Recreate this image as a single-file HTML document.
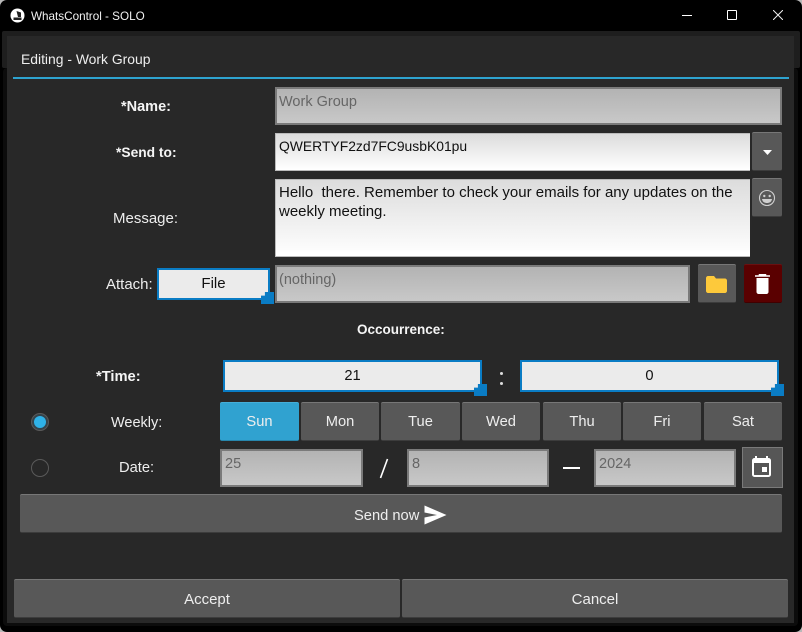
<!DOCTYPE html>
<html><head><meta charset="utf-8">
<style>
html,body{margin:0;padding:0;background:#b8b8b8;}
body{width:802px;height:632px;overflow:hidden;position:relative;font-family:"Liberation Sans",sans-serif;font-size:14.7px;color:#eee;}
div,svg{position:absolute;box-sizing:border-box;}
.t{white-space:nowrap;line-height:18px;}
.btn{background:#585858;border-radius:2px;border-top:1px solid #777;border-bottom:1px solid #3c3c3c;color:#eee;text-align:center;}
.dis{background:linear-gradient(#b3b3b3,#c8c8c8);border:2px solid #7a7a7a;color:#666;padding:4px 0 0 2px;line-height:18px;font-size:14.500px;}
.inp{background:linear-gradient(#dcdcdc,#fff);border:1px solid #bbb;border-right:0;color:#111;padding:3px 3px;line-height:19px;}
.foc{background:#ebebeb;border:3px solid #0a7cc4;border-width:2.500px;color:#111;text-align:center;}
.h{background:#0a7cc4;width:13px;height:12px;clip-path:polygon(30% 0,100% 0,100% 100%,0 100%,0 30%,30% 30%);}
</style></head><body>
<div style="left:0;top:0;width:802px;height:632px;background:#000;border-radius:7px;"></div>
<div style="left:2px;top:31px;width:798px;height:37px;background:#1e1e1e;border-radius:2px;"></div>
<div style="left:3px;top:68px;width:795px;height:558px;background:#0c0c0c;border-radius:4px;"></div>
<svg style="left:10px;top:8px" width="15" height="15" viewBox="0 0 15 15"><circle cx="7.500" cy="7.500" r="7" fill="#fff"/><path d="M3.500 9.500h8v2.500h-8zM6.500 3l4.500 1.500v4.500H8z" fill="#222"/></svg>
<div class="t" style="left:31px;top:8px;font-size:11.700px;color:#f2f2f2;">WhatsControl - SOLO</div>
<div style="left:682px;top:15px;width:10px;height:1px;background:#fff;"></div>
<div style="left:727px;top:10px;width:10px;height:10px;border:1px solid #fff;border-radius:1px;"></div>
<svg style="left:773px;top:10px" width="10" height="10" viewBox="0 0 10 10"><path d="M0 0L10 10M10 0L0 10" stroke="#eee" stroke-width="1"/></svg>

<div style="left:7px;top:36px;width:787px;height:587px;background:#282828;"></div>
<div class="t" style="left:21px;top:50px;font-size:13.900px;color:#eee;">Editing - Work Group</div>
<div style="left:13px;top:77px;width:776px;height:2px;background:#2ea3d0;"></div>

<div class="t" style="left:121px;top:98px;font-weight:bold;font-size:14.500px;color:#f5f5f5;">*Name:</div>
<div class="dis" style="left:275px;top:87px;width:507px;height:38px;">Work Group</div>

<div class="t" style="left:116px;top:144px;font-weight:bold;font-size:13.800px;color:#f5f5f5;">*Send to:</div>
<div class="inp" style="left:275px;top:133px;width:475px;height:38px;font-size:13.900px;">QWERTYF2zd7FC9usbK01pu</div>
<div class="btn" style="left:752px;top:132px;width:30px;height:39px;"></div>
<svg style="left:762px;top:150px" width="11" height="6" viewBox="0 0 11 6"><path d="M1 0H10L5.500 5z" fill="#fff"/></svg>

<div class="t" style="left:113px;top:210px;font-size:15px;">Message:</div>
<div class="inp" style="left:275px;top:179px;width:475px;height:78px;font-size:15px;">Hello&nbsp; there. Remember to check your emails for any updates on the weekly meeting.</div>
<div class="btn" style="left:752px;top:178px;width:30px;height:39px;"></div>
<svg style="left:758px;top:189px" width="18" height="18" viewBox="0 0 18 18"><circle cx="9" cy="9" r="7.500" fill="none" stroke="#cfcfcf" stroke-width="1.100"/><circle cx="6.300" cy="7" r="1.200" fill="#cfcfcf"/><circle cx="11.700" cy="7" r="1.200" fill="#cfcfcf"/><path d="M4 10h10c-.5 3-2.500 4-5 4s-4.500-1-5-4z" fill="#cfcfcf"/></svg>

<div class="t" style="left:106px;top:276px;font-size:15px;">Attach:</div>
<div class="foc" style="left:157px;top:268px;width:113px;height:32px;line-height:28px;font-size:15px;">File</div>
<div class="h" style="left:261px;top:292px;"></div>
<div class="dis" style="left:275px;top:265px;width:415px;height:38px;">(nothing)</div>
<div class="btn" style="left:698px;top:264px;width:38px;height:39px;"></div>
<svg style="left:706px;top:276px" width="21" height="17" viewBox="0 0 21 17"><path d="M2 0H8L10 2.500H19C20 2.500 21 3.500 21 4.500V15C21 16 20 17 19 17H2C1 17 0 16 0 15V2C0 1 1 0 2 0Z" fill="#fdc93b"/></svg>
<div class="btn" style="left:744px;top:264px;width:38px;height:39px;background:#5a0000;border-color:#6a1010 #5a0000 #400000;"></div>
<svg style="left:755px;top:274px" width="15" height="20" viewBox="0 0 15 20"><path d="M0 2H15M4.500 1.500V0.500H10.500V1.500" stroke="#fff" stroke-width="1.500" fill="none"/><path d="M1.500 4H13.500V18C13.500 19 12.500 20 11.500 20H3.500C2.500 20 1.500 19 1.500 18Z" fill="#fff"/></svg>

<div class="t" style="left:357px;top:321px;font-weight:bold;font-size:13.500px;color:#f5f5f5;">Occourrence:</div>

<div class="t" style="left:96px;top:368px;font-weight:bold;color:#f5f5f5;">*Time:</div>
<div class="foc" style="left:223px;top:360px;width:259px;height:32px;line-height:29px;">21</div>
<div class="h" style="left:474px;top:384px;"></div>
<div style="left:500px;top:372px;width:3px;height:3px;background:#ddd;border-radius:50%;"></div>
<div style="left:500px;top:382px;width:3px;height:3px;background:#ddd;border-radius:50%;"></div>
<div class="foc" style="left:520px;top:360px;width:259px;height:32px;line-height:29px;">0</div>
<div class="h" style="left:771px;top:384px;"></div>

<div style="left:31px;top:413px;width:18px;height:18px;border-radius:50%;border:1px solid #5a5a5a;background:#33434c;"></div>
<div style="left:34px;top:416px;width:12px;height:12px;border-radius:50%;background:#2fb2e8;"></div>
<div class="t" style="left:111px;top:414px;font-size:14.500px;">Weekly:</div>
<div class="btn" style="left:220px;top:402px;width:79px;height:39px;line-height:39px;background:#30a2d0;border-color:#45aed8 #30a2d0 #2786ac;">Sun</div>
<div class="btn" style="left:301px;top:402px;width:78px;height:39px;line-height:39px;">Mon</div>
<div class="btn" style="left:381px;top:402px;width:79px;height:39px;line-height:39px;">Tue</div>
<div class="btn" style="left:462px;top:402px;width:78px;height:39px;line-height:39px;">Wed</div>
<div class="btn" style="left:543px;top:402px;width:78px;height:39px;line-height:39px;">Thu</div>
<div class="btn" style="left:623px;top:402px;width:78px;height:39px;line-height:39px;">Fri</div>
<div class="btn" style="left:704px;top:402px;width:78px;height:39px;line-height:39px;">Sat</div>

<div style="left:31px;top:459px;width:18px;height:18px;border-radius:50%;border:1px solid #5a5a5a;"></div>
<div class="t" style="left:119px;top:459px;">Date:</div>
<div class="dis" style="left:220px;top:449px;width:143px;height:38px;padding-left:3px;">25</div>
<svg style="left:378px;top:458px" width="12" height="22" viewBox="0 0 12 22"><path d="M9.500 1L2.500 20" stroke="#fff" stroke-width="1.600"/></svg>
<div class="dis" style="left:407px;top:449px;width:142px;height:38px;padding-left:3px;">8</div>
<div style="left:563px;top:467px;width:17px;height:2px;background:#fff;"></div>
<div class="dis" style="left:594px;top:449px;width:142px;height:38px;padding-left:3px;">2024</div>
<div style="left:742px;top:447px;width:41px;height:41px;background:#565656;border:1px solid #7a7a7a;"></div>
<svg style="left:752px;top:456px" width="19" height="21" viewBox="0 0 19 21"><path d="M4 0V3M15 0V3" stroke="#fff" stroke-width="2"/><rect x="1" y="3" width="17" height="17" rx="1.500" fill="none" stroke="#fff" stroke-width="2"/><rect x="1" y="3" width="17" height="4" fill="#fff"/><rect x="10" y="11" width="5" height="5" fill="#fff"/></svg>

<div class="btn" style="left:20px;top:494px;width:762px;height:39px;"></div>
<div class="t" style="left:354px;top:507px;">Send now</div>
<svg style="left:424px;top:505px" width="23" height="20" viewBox="0 0 23 20"><path d="M0.500 0.500L22.500 10L0.500 19.500V12.500L13 10L0.500 7.500Z" fill="#fff"/></svg>

<div class="btn" style="left:14px;top:579px;width:386px;height:39px;line-height:39px;font-size:15px;">Accept</div>
<div class="btn" style="left:402px;top:579px;width:386px;height:39px;line-height:39px;font-size:15px;">Cancel</div>
</body></html>
